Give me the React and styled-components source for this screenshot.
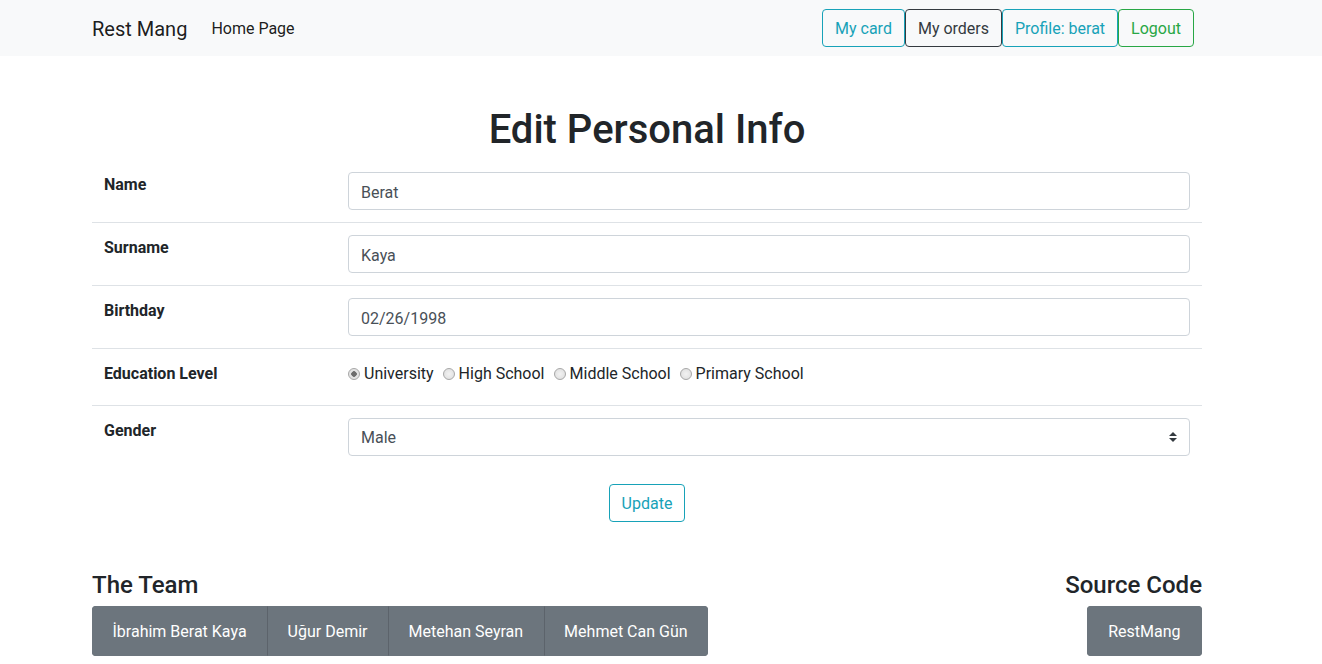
import React, { useState } from "react";
import styled, { createGlobalStyle } from "styled-components";

const GlobalStyle = createGlobalStyle`
  * { box-sizing: border-box; }
  body {
    margin: 0;
    font-family: Roboto, "Liberation Sans", sans-serif;
    font-size: 16px;
    line-height: 1.5;
    color: #212529;
    background: #fff;
  }
`;

const team = ["İbrahim Berat Kaya", "Uğur Demir", "Metehan Seyran", "Mehmet Can Gün"];
const levels = ["University", "High School", "Middle School", "Primary School"];

const selectArrow =
  "url(\"data:image/svg+xml,%3csvg xmlns='http://www.w3.org/2000/svg' width='4' height='5' viewBox='0 0 4 5'%3e%3cpath fill='%23343a40' d='M2 0L0 2h4zm0 5L0 3h4z'/%3e%3c/svg%3e\")";

function App() {
  const [level, setLevel] = useState("University");

  return (
    <>
      <GlobalStyle />
      <Navbar>
        <NavInner>
          <Brand>Rest Mang</Brand>
          <NavLink>Home Page</NavLink>
          <NavActions>
            <OutlineButton $color="#17a2b8">My card</OutlineButton>
            <OutlineButton $color="#343a40">My orders</OutlineButton>
            <OutlineButton $color="#17a2b8">Profile: berat</OutlineButton>
            <OutlineButton $color="#28a745">Logout</OutlineButton>
          </NavActions>
        </NavInner>
      </Navbar>

      <Container>
        <Title>Edit Personal Info</Title>
        <Table>
          <tbody>
            <tr>
              <th>Name</th>
              <td>
                <Input defaultValue="Berat" />
              </td>
            </tr>
            <tr>
              <th>Surname</th>
              <td>
                <Input defaultValue="Kaya" />
              </td>
            </tr>
            <tr>
              <th>Birthday</th>
              <td>
                <Input defaultValue="02/26/1998" />
              </td>
            </tr>
            <tr>
              <th>Education Level</th>
              <td>
                <RadioGroup>
                  {levels.map((l) => (
                    <RadioLabel key={l}>
                      <Radio
                        type="radio"
                        name="education"
                        checked={level === l}
                        onChange={() => setLevel(l)}
                      />
                      {l}
                    </RadioLabel>
                  ))}
                </RadioGroup>
              </td>
            </tr>
            <tr>
              <th>Gender</th>
              <td>
                <Select defaultValue="Male">
                  <option>Male</option>
                  <option>Female</option>
                </Select>
              </td>
            </tr>
          </tbody>
        </Table>

        <Center>
          <OutlineButton $color="#17a2b8">Update</OutlineButton>
        </Center>

        <Footer>
          <div>
            <FooterTitle>The Team</FooterTitle>
            <ButtonGroup>
              {team.map((name) => (
                <GrayButton key={name}>{name}</GrayButton>
              ))}
            </ButtonGroup>
          </div>
          <RightCol>
            <FooterTitle>Source Code</FooterTitle>
            <ButtonGroup>
              <GrayButton $wide>RestMang</GrayButton>
            </ButtonGroup>
          </RightCol>
        </Footer>
      </Container>
    </>
  );
}

export default App;

const Navbar = styled.nav`
  background: #f8f9fa;
  height: 56px;
`;

const NavInner = styled.div`
  width: 1110px;
  margin-left: 92px;
  height: 100%;
  display: flex;
  align-items: center;
`;

const Brand = styled.a`
  font-size: 20px;
  color: rgba(0, 0, 0, 0.9);
  margin-right: 16px;
  padding-top: 2px;
  line-height: 30px;
`;

const NavLink = styled.a`
  padding: 9px 8px 7px;
  color: rgba(0, 0, 0, 0.9);
`;

const NavActions = styled.div`
  margin-left: auto;
  margin-right: 8px;
  display: flex;
`;

const OutlineButton = styled.button`
  font-family: inherit;
  font-size: 16px;
  line-height: 24px;
  padding: 7px 12px 5px;
  background: transparent;
  color: ${(p) => p.$color};
  border: 1px solid ${(p) => p.$color};
  border-radius: 4px;
  cursor: pointer;
`;

const Container = styled.main`
  width: 1110px;
  margin-left: 92px;
`;

const Title = styled.h1`
  margin: 50px 0 6px;
  font-size: 40px;
  font-weight: 500;
  line-height: 1.2;
  text-align: center;
`;

const Table = styled.table`
  width: 100%;
  border-collapse: collapse;

  th,
  td {
    padding: 12px;
    vertical-align: top;
    text-align: left;
  }
  th {
    width: 244px;
    font-weight: 700;
    padding-top: 13px;
  }
  tr + tr {
    border-top: 1px solid #dee2e6;
  }
`;

const Input = styled.input`
  display: block;
  width: 100%;
  height: 38px;
  padding: 7px 12px 5px;
  font-family: inherit;
  font-size: 16px;
  color: #495057;
  border: 1px solid #ced4da;
  border-radius: 4px;
  background: #fff;
`;

const Select = styled.select`
  display: block;
  width: 100%;
  height: 38px;
  padding: 6px 28px 6px 12px;
  font-family: inherit;
  font-size: 16px;
  color: #495057;
  border: 1px solid #ced4da;
  border-radius: 4px;
  appearance: none;
  background: #fff ${selectArrow} no-repeat right 12px center / 8px 10px;
`;

const RadioGroup = styled.div`
  display: flex;
  gap: 9px;
  padding-top: 1px;
  padding-bottom: 7px;
`;

const RadioLabel = styled.label`
  display: flex;
  align-items: center;
  gap: 4px;
`;

const Radio = styled.input`
  appearance: none;
  margin: 0;
  width: 12px;
  height: 12px;
  border-radius: 50%;
  border: 1px solid #a8a8a8;
  background: radial-gradient(circle, #f2f2f2 0%, #dcdcdc 100%);

  &:checked {
    background: radial-gradient(circle, #6e6e6e 0 2.5px, #e4e4e4 3px);
  }
`;

const Center = styled.div`
  display: flex;
  justify-content: center;
  margin-top: 16px;
`;

const Footer = styled.footer`
  margin-top: 49px;
  display: flex;
  justify-content: space-between;
  align-items: flex-start;
`;

const RightCol = styled.div`
  display: flex;
  flex-direction: column;
  align-items: flex-end;
`;

const FooterTitle = styled.h4`
  margin: 0 0 6px;
  font-size: 24px;
  font-weight: 500;
  line-height: 1.2;
`;

const ButtonGroup = styled.div`
  display: inline-flex;
  border-radius: 4px;
  overflow: hidden;
`;

const GrayButton = styled.button`
  font-family: inherit;
  font-size: 16px;
  line-height: 24px;
  padding: 13px ${(p) => (p.$wide ? "20.5px" : "19.5px")} 11px;
  background: #6c757d;
  color: #fff;
  border: 1px solid #6c757d;
  cursor: pointer;

  & + & {
    border-left-color: #5c636b;
  }
`;
